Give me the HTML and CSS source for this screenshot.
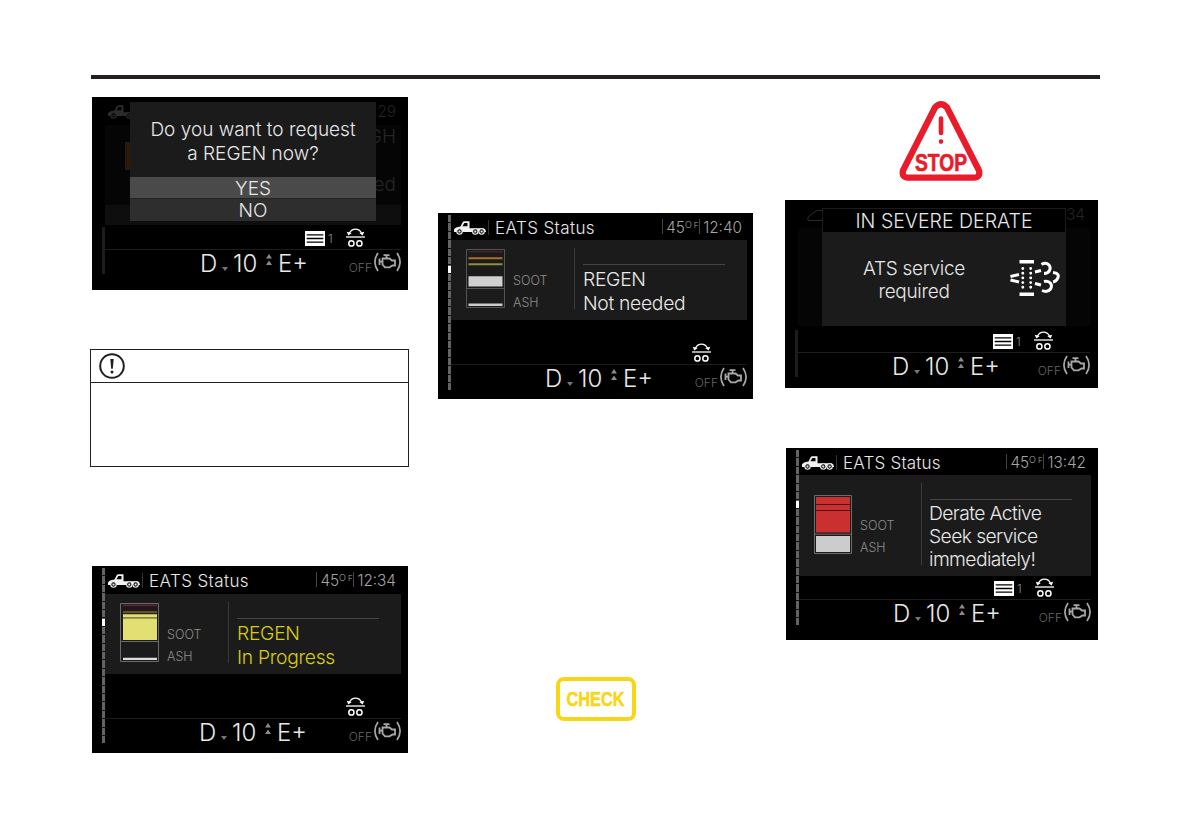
FILE: index.html
```html
<!DOCTYPE html>
<html lang="en">
<head>
    <meta charset="UTF-8">
    <title>EATS Status</title>
    <link rel="stylesheet" href="styles.css">
</head>
<body>
<svg class="sprite">
    <symbol id="truck" viewBox="0 0 32 14">
        <path fill="currentColor" d="M0 11V8.500Q1 6 6.500 5.500L8.500 1.500Q9 .3 10.500 .3H15.500V7.300H29.500Q31.500 7.500 32 10.500V11Z"/>
        <path fill="#000" d="M8.500 5.200L10.300 2H13.500V5.200Z"/>
        <g fill="#000" stroke="currentColor" stroke-width="1.100">
            <circle cx="5.500" cy="10.500" r="2.700"/>
            <circle cx="21.300" cy="10.500" r="2.700"/>
            <circle cx="27.600" cy="10.500" r="2.700"/>
        </g>
        <path fill="currentColor" d="M4.500 9.500H6.500V11.500H4.500ZM20.300 9.500H22.300V11.500H20.300ZM26.600 9.500H28.600V11.500H26.600Z"/>
    </symbol>
    <symbol id="axle" viewBox="0 0 19 19">
        <g fill="none" stroke="#fff">
            <path stroke-width="1.300" d="M3.500 5C6 -.2 13 -.2 15.500 5"/>
            <path stroke-width="1.300" d="M0 9H19"/>
            <circle cx="5.400" cy="15.400" r="2.600" stroke-width="1.500"/>
            <circle cx="13.400" cy="15.400" r="2.600" stroke-width="1.500"/>
        </g>
        <path fill="#fff" d="M.8 3.800L5.800 5L2.300 7.600ZM18.200 3.800L13.200 5L16.700 7.600Z"/>
    </symbol>
    <symbol id="list" viewBox="0 0 20 15">
        <path fill="#fff" d="M0 0H20V15H0Z"/>
        <path stroke="#000" stroke-width="1.300" d="M1.700 3.800H18.300M1.700 7.500H18.300M1.700 11.200H18.300"/>
    </symbol>
    <symbol id="engine" viewBox="0 0 27 20">
        <g fill="none" stroke="#a8a8a8">
            <path stroke-width="1.700" d="M4 1Q-2.200 10 4 19M23 1Q29.200 10 23 19"/>
            <path stroke-width="1.800" d="M8.500 6.500H15.500L18 8.500H21V13.500H18.500L15.500 15.300H11L8.500 12.500ZM5.500 6.500V13M5.500 9.700H8.500M12.500 6V3.500M9.500 3.200H15.500"/>
        </g>
    </symbol>
    <symbol id="filter" viewBox="0 0 50 36">
        <g fill="none" stroke="#fff" stroke-width="3">
            <path d="M9.500 1.800H24M9.500 34.200H24" stroke-width="3.600"/>
            <path d="M.5 16.500L9 14.500M.5 20L9 22M25 12L31 10.500M25 23.500L31 25"/>
            <path d="M31.500 4.500C36 1.500 42 5 39.500 10.500Q38 13.500 34 13.500M34 21.500C40 20 43 25 40.500 29Q37.500 33 32 30.500M43 12.500Q51 13.500 47 19.500Q45.500 21.500 43 22"/>
        </g>
        <path stroke="#fff" stroke-width="2.900" stroke-linecap="round" stroke-dasharray="0 4.700" d="M12.800 8.500V28M20.700 8.500V28"/>
    </symbol>
</svg>

<div id="page">
    <div class="rule"></div>
    <div class="columns">
        <div class="col first">
            <div class="screen ask">
                <div class="strip dim"></div>
                <div class="main">
                    <div class="head ghost">
                        <svg class="truck"><use href="#truck"/></svg>
                        <span class="time">12:29</span>
                    </div>
                    <div class="panel under">
                        <span class="bar"></span>
                        <p class="under-text">HIGH<br><br>needed</p>
                    </div>
                    <div class="band"></div>
                    <div class="status">
                        <svg class="list"><use href="#list"/></svg><span class="count">1</span>
                        <svg class="axle"><use href="#axle"/></svg>
                    </div>
                    <div class="gear">
                        <span class="d">D</span><i class="down"></i><span class="num">10</span><i class="ups"></i><span class="mode">E+</span>
                        <span class="off">OFF</span><svg class="engine"><use href="#engine"/></svg>
                    </div>
                </div>
                <div class="modal question">
                    <p>Do you want to request<br>a REGEN now?</p>
                    <div class="option selected">YES</div>
                    <div class="option">NO</div>
                </div>
            </div>

            <div class="notice">
                <div class="notice-head">
                    <svg width="26" height="26" viewBox="0 0 26 26">
                        <circle cx="13" cy="13" r="11.800" fill="none" stroke="#231f20" stroke-width="2"/>
                        <path fill="#231f20" d="M11.300 6H14.700L13.800 15.800H12.200Z"/>
                        <circle cx="13" cy="19" r="1.500" fill="#231f20"/>
                    </svg>
                </div>
            </div>

            <div class="screen progress">
                <div class="strip"></div>
                <div class="main">
                    <div class="head">
                        <svg class="truck"><use href="#truck"/></svg>
                        <span class="title">EATS Status</span>
                        <span class="temp">45<sup>O</sup><sup class="f">F</sup></span>
                        <span class="time">12:34</span>
                    </div>
                    <div class="panel">
                        <svg class="gauge" viewBox="0 0 39 59">
                            <path fill="#251419" d="M3 2H37V11H3Z"/>
                            <path fill="#6d3440" d="M3 1.700H37V2.700H3Z"/>
                            <path fill="#5d5429" d="M3 8H37V10.300H3Z"/>
                            <path fill="#e2df73" d="M3 11.300H37V37H3Z"/>
                            <path fill="#8a8645" d="M3 14H37V15.700H3Z"/>
                            <path fill="#ddd" d="M3 54.700H37V57H3Z"/>
                            <path fill="none" stroke="#6b6b6b" d="M.5 .5H38.500V58.500H.5ZM1 38.500H38"/>
                        </svg>
                        <div class="labels">SOOT<br>ASH</div>
                        <div class="message yellow">REGEN<br>In Progress</div>
                    </div>
                    <div class="status">
                        <svg class="axle"><use href="#axle"/></svg>
                    </div>
                    <div class="gear">
                        <span class="d">D</span><i class="down"></i><span class="num">10</span><i class="ups"></i><span class="mode">E+</span>
                        <span class="off">OFF</span><svg class="engine"><use href="#engine"/></svg>
                    </div>
                </div>
            </div>
        </div>

        <div class="col second">
            <div class="screen idle">
                <div class="strip"></div>
                <div class="main">
                    <div class="head">
                        <svg class="truck"><use href="#truck"/></svg>
                        <span class="title">EATS Status</span>
                        <span class="temp">45<sup>O</sup><sup class="f">F</sup></span>
                        <span class="time">12:40</span>
                    </div>
                    <div class="panel">
                        <svg class="gauge" viewBox="0 0 39 59">
                            <path fill="#5c2b33" d="M2.500 2.300H36.500V3.300H2.500Z"/>
                            <path fill="#a8702f" d="M2.500 8.300H36.500V10.300H2.500Z"/>
                            <path fill="#8f8d42" d="M2.500 14.300H36.500V16.300H2.500Z"/>
                            <path fill="#d0d0d0" d="M2.500 27.300H36.500V37.500H2.500Z"/>
                            <path fill="#ccc" d="M2.500 54.500H36.500V57H2.500Z"/>
                            <path fill="none" stroke="#555" d="M.5 .5H38.500V58.500H.5ZM1 39.500H38"/>
                        </svg>
                        <div class="labels">SOOT<br>ASH</div>
                        <div class="message">REGEN<br>Not needed</div>
                    </div>
                    <div class="status">
                        <svg class="axle"><use href="#axle"/></svg>
                    </div>
                    <div class="gear">
                        <span class="d">D</span><i class="down"></i><span class="num">10</span><i class="ups"></i><span class="mode">E+</span>
                        <span class="off">OFF</span><svg class="engine"><use href="#engine"/></svg>
                    </div>
                </div>
            </div>

            <svg class="check" viewBox="0 0 80 44">
                <rect x="2" y="2" width="76" height="40" rx="6" fill="none" stroke="#f8d616" stroke-width="4"/>
                <text x="10.500" y="29" textLength="58" lengthAdjust="spacingAndGlyphs">CHECK</text>
            </svg>
        </div>

        <div class="col third">
            <svg class="stop" viewBox="0 0 84 80">
                <path fill="none" stroke="#e81c2b" stroke-width="6.300" stroke-linejoin="round" d="M36 6.500Q42 0 48 6.500L80 69.500Q81.500 76.500 75 76.700H9Q2.500 76.500 4 69.500Z"/>
                <path stroke="#e81c2b" stroke-width="4.600" stroke-linecap="round" d="M42 17.500V32M42 40.500V40.600"/>
                <text x="16" y="69.800" textLength="52" lengthAdjust="spacingAndGlyphs">STOP</text>
            </svg>

            <div class="screen severe">
                <div class="strip dim"></div>
                <div class="main">
                    <div class="head ghost">
                        <svg class="cab" viewBox="0 0 15 12"><path fill="none" stroke="#2a2a2a" d="M15 .5H10L4 4.500L1 7V10.500H15"/></svg>
                        <span class="time">12:34</span>
                    </div>
                    <div class="panel under"></div>
                    <div class="status">
                        <svg class="list"><use href="#list"/></svg><span class="count">1</span>
                        <svg class="axle"><use href="#axle"/></svg>
                    </div>
                    <div class="gear">
                        <span class="d">D</span><i class="down"></i><span class="num">10</span><i class="ups"></i><span class="mode">E+</span>
                        <span class="off">OFF</span><svg class="engine"><use href="#engine"/></svg>
                    </div>
                </div>
                <div class="modal alert">
                    <div class="alert-title">IN SEVERE DERATE</div>
                    <div class="alert-body">
                        <p>ATS service<br>required</p>
                        <svg class="filter"><use href="#filter"/></svg>
                    </div>
                </div>
            </div>

            <div class="screen derate">
                <div class="strip"></div>
                <div class="main">
                    <div class="head">
                        <svg class="truck"><use href="#truck"/></svg>
                        <span class="title">EATS Status</span>
                        <span class="temp">45<sup>O</sup><sup class="f">F</sup></span>
                        <span class="time">13:42</span>
                    </div>
                    <div class="panel">
                        <svg class="gauge" viewBox="0 0 38 59">
                            <path fill="#c9302f" d="M2 2H36V37.500H2Z"/>
                            <path fill="#ccc" d="M2 41H36V57H2Z"/>
                            <path stroke="#4a1414" d="M2 9.500H36M2 15.500H36"/>
                            <path fill="none" stroke="#6b6b6b" d="M.5 .5H37.500V58.500H.5ZM1 39.200H37"/>
                        </svg>
                        <div class="labels">SOOT<br>ASH</div>
                        <div class="message">Derate Active<br>Seek service<br>immediately!</div>
                    </div>
                    <div class="status">
                        <svg class="list"><use href="#list"/></svg><span class="count">1</span>
                        <svg class="axle"><use href="#axle"/></svg>
                    </div>
                    <div class="gear">
                        <span class="d">D</span><i class="down"></i><span class="num">10</span><i class="ups"></i><span class="mode">E+</span>
                        <span class="off">OFF</span><svg class="engine"><use href="#engine"/></svg>
                    </div>
                </div>
            </div>
        </div>
    </div>
</div>
</body>
</html>
```
FILE: styles.css
```css
*{
    margin: 0;
    padding: 0;
    box-sizing: border-box;
}
body{
    background: #ffffff;
    font-family: Inter, "Liberation Sans", sans-serif;
    font-weight: 300;
}
svg{
    display: block;
    flex: none;
}
.sprite{
    width: 0;
    height: 0;
    position: absolute;
}
#page{
    width: 1191px;
    height: 839px;
    padding: 75px 91px 0 90px;
    overflow: hidden;
}
.rule{
    height: 4px;
    margin-left: 1px;
    background: #231f20;
}
.columns{
    display: grid;
    grid-template-columns: 348px 347px 315px;
}
.col{
    display: flex;
    flex-direction: column;
    align-items: flex-start;
}
.first{
    padding: 18px 0 0 2px;
}
.second{
    padding-top: 134px;
}
.third{
    padding-top: 22px;
}

/* display unit */
.screen{
    position: relative;
    display: flex;
    width: 316px;
    height: 187px;
    background: #000000;
    color: #e8e8e8;
    white-space: nowrap;
    overflow: hidden;
}
.ask{
    height: 193px;
}
.idle{
    width: 315px;
    height: 186px;
}
.severe{
    width: 313px;
    height: 188px;
    margin-top: 19px;
}
.derate{
    width: 312px;
    height: 192px;
    margin: 60px 0 0 1px;
}
.strip{
    width: 3px;
    height: 175px;
    margin: 2px 0 0 10px;
    background: linear-gradient(#fff, #fff) 0 51px / 3px 7px no-repeat, repeating-linear-gradient(#646464 0, #646464 7.4px, #111 7.4px, #111 8.4px);
}
.strip.dim{
    height: 47px;
    margin-top: 130px;
    background: #1c1c1c;
}
.main{
    width: 296px;
    display: flex;
    flex-direction: column;
}
.severe .main, .derate .main{
    width: 292px;
}
.head{
    display: flex;
    height: 28px;
    padding: 4px 5px 0 3px;
    line-height: 23px;
}
.idle .head, .derate .head{
    height: 27px;
}
.truck{
    width: 32px;
    height: 14px;
    margin-top: 4px;
    color: #f2f2f2;
}
.title{
    height: 15px;
    margin: 3px auto 0 2px;
    padding-left: 6px;
    border-left: 1px solid #333;
    line-height: 17px;
    font-size: 17px;
    letter-spacing: 0.4px;
}
.derate .title{
    letter-spacing: 0.2px;
}
.temp, .time{
    height: 15px;
    margin-top: 2px;
    padding-left: 3px;
    border-left: 1px solid #444;
    line-height: 17px;
    font-size: 15.3px;
    color: #a5a5a5;
}
.temp{
    width: 37px;
}
.temp sup{
    font-size: 9px;
    line-height: 0;
    vertical-align: 5px;
}
.temp .f{
    margin-left: 2px;
    font-size: 8px;
}
.panel{
    display: flex;
    height: 80px;
    background: #1b1b1b;
}
.derate .panel{
    height: 101px;
}
.gauge{
    width: 39px;
    height: 59px;
    margin: 9px 0 0 15px;
}
.derate .gauge{
    width: 38px;
    margin-top: 20px;
}
.labels{
    width: 53px;
    margin: 30px 0 0 8px;
    font-size: 12.5px;
    line-height: 22px;
    color: #8c8c8c;
}
.derate .labels{
    width: 53px;
    margin-top: 40px;
}
.message{
    position: relative;
    margin: 8px 0 11px 8px;
    padding: 19px 0 0 8px;
    border-left: 1px solid #3a3a3a;
    font-size: 19.3px;
    letter-spacing: -0.3px;
    line-height: 24px;
}
.derate .message{
    padding-left: 7px;
    letter-spacing: -0.6px;
    line-height: 23px;
}
.message:before{
    content: "";
    position: absolute;
    left: 8px;
    top: 16px;
    width: 142px;
    height: 1px;
    background: #454545;
}
.yellow{
    color: #d8cb14;
}
.status{
    display: flex;
    flex: 1;
    align-items: flex-end;
    justify-content: flex-end;
    padding: 0 36px 2px 0;
    border-bottom: 1px solid #1d1d1d;
}
.derate .status, .severe .status{
    padding-right: 37px;
}
.list{
    width: 20px;
    height: 15px;
    margin-bottom: 1px;
}
.count{
    width: 21px;
    padding-left: 3px;
    font-size: 12px;
    line-height: 17px;
    color: #8c8c8c;
}
.axle{
    width: 19px;
    height: 19px;
}
.gear{
    display: flex;
    height: 34px;
    padding-left: 94px;
    font-size: 24px;
    line-height: 27px;
}
.ask .gear{
    height: 40px;
    padding-left: 95px;
}
.severe .gear{
    height: 35px;
}
.derate .gear{
    height: 40px;
}
.d{
    width: 22px;
}
.down{
    margin-top: 17px;
    border: 3px solid transparent;
    border-top: 4px solid #777;
    border-bottom: 0;
    height: 0;
}
.num{
    width: 33px;
    margin-left: 5px;
}
.ups{
    width: 6px;
    height: 11px;
    margin-top: 4px;
    background: #8a8a8a;
    clip-path: polygon(50% 0, 100% 42%, 0 42%, 50% 0, 50% 58%, 100% 100%, 0 100%, 50% 58%);
}
.mode{
    margin: 0 auto 0 6px;
}
.off{
    margin-top: 5px;
    font-size: 12px;
    line-height: 26px;
    color: #666;
}
.engine{
    width: 27px;
    height: 20px;
    margin: 2px 0 0 2px;
}

/* faded screen behind a dialog */
.ghost{
    justify-content: space-between;
}
.ghost .truck{
    color: #2c2c2c;
}
.ghost .time{
    border: 0;
    color: #232323;
}
.cab{
    width: 15px;
    height: 12px;
    margin: 6px 0 0 6px;
}
.under{
    background: #050505;
    justify-content: space-between;
}
.severe .under{
    height: 98px;
}
.bar{
    width: 6px;
    height: 28px;
    margin: 17px 0 0 20px;
    background: #2b1a0b;
}
.under-text{
    margin-right: 5px;
    font-size: 19px;
    line-height: 24px;
    color: #252525;
    text-align: right;
}
.band{
    height: 20px;
    background: #0e0e0e;
}
.modal{
    position: absolute;
    left: 38px;
    top: 5px;
    width: 246px;
    text-align: center;
    font-size: 19px;
    background: #1b1b1b;
}
.question p{
    height: 75px;
    padding-top: 16px;
    line-height: 23.5px;
}
.option{
    height: 22px;
    line-height: 24px;
    background: #2e2e2e;
}
.option.selected{
    background: #4a4a4a;
    border-bottom: 1px solid #222;
}
.alert{
    left: 37px;
    top: 8px;
    width: 244px;
    height: 118px;
    border: 1px solid #1b1b1b;
}
.alert-title{
    height: 23px;
    background: #000000;
    line-height: 24px;
    font-size: 19.5px;
}
.alert-body{
    display: flex;
    padding: 25px 5px 0 0;
    line-height: 23px;
}
.alert-body p{
    width: 182px;
    letter-spacing: -0.3px;
}
.filter{
    width: 50px;
    height: 36px;
    margin: 3px 0 0 auto;
}

.notice{
    width: 319px;
    height: 118px;
    margin: 59px 0 99px -2px;
    border: 1px solid #231f20;
}
.notice-head{
    height: 33px;
    padding: 3px 0 0 8px;
    border-bottom: 1px solid #231f20;
}
.check{
    width: 80px;
    height: 44px;
    margin: 278px 0 0 118px;
}
.check text{
    font: bold 20px "Liberation Sans", sans-serif;
    fill: #f8d616;
    stroke: #f8d616;
    stroke-width: 0.5px;
}
.stop{
    width: 84px;
    height: 80px;
    margin-left: 114px;
}
.stop text{
    font: bold 24px "Liberation Sans", sans-serif;
    fill: #e81c2b;
    stroke: #e81c2b;
    stroke-width: 0.7px;
}
```
